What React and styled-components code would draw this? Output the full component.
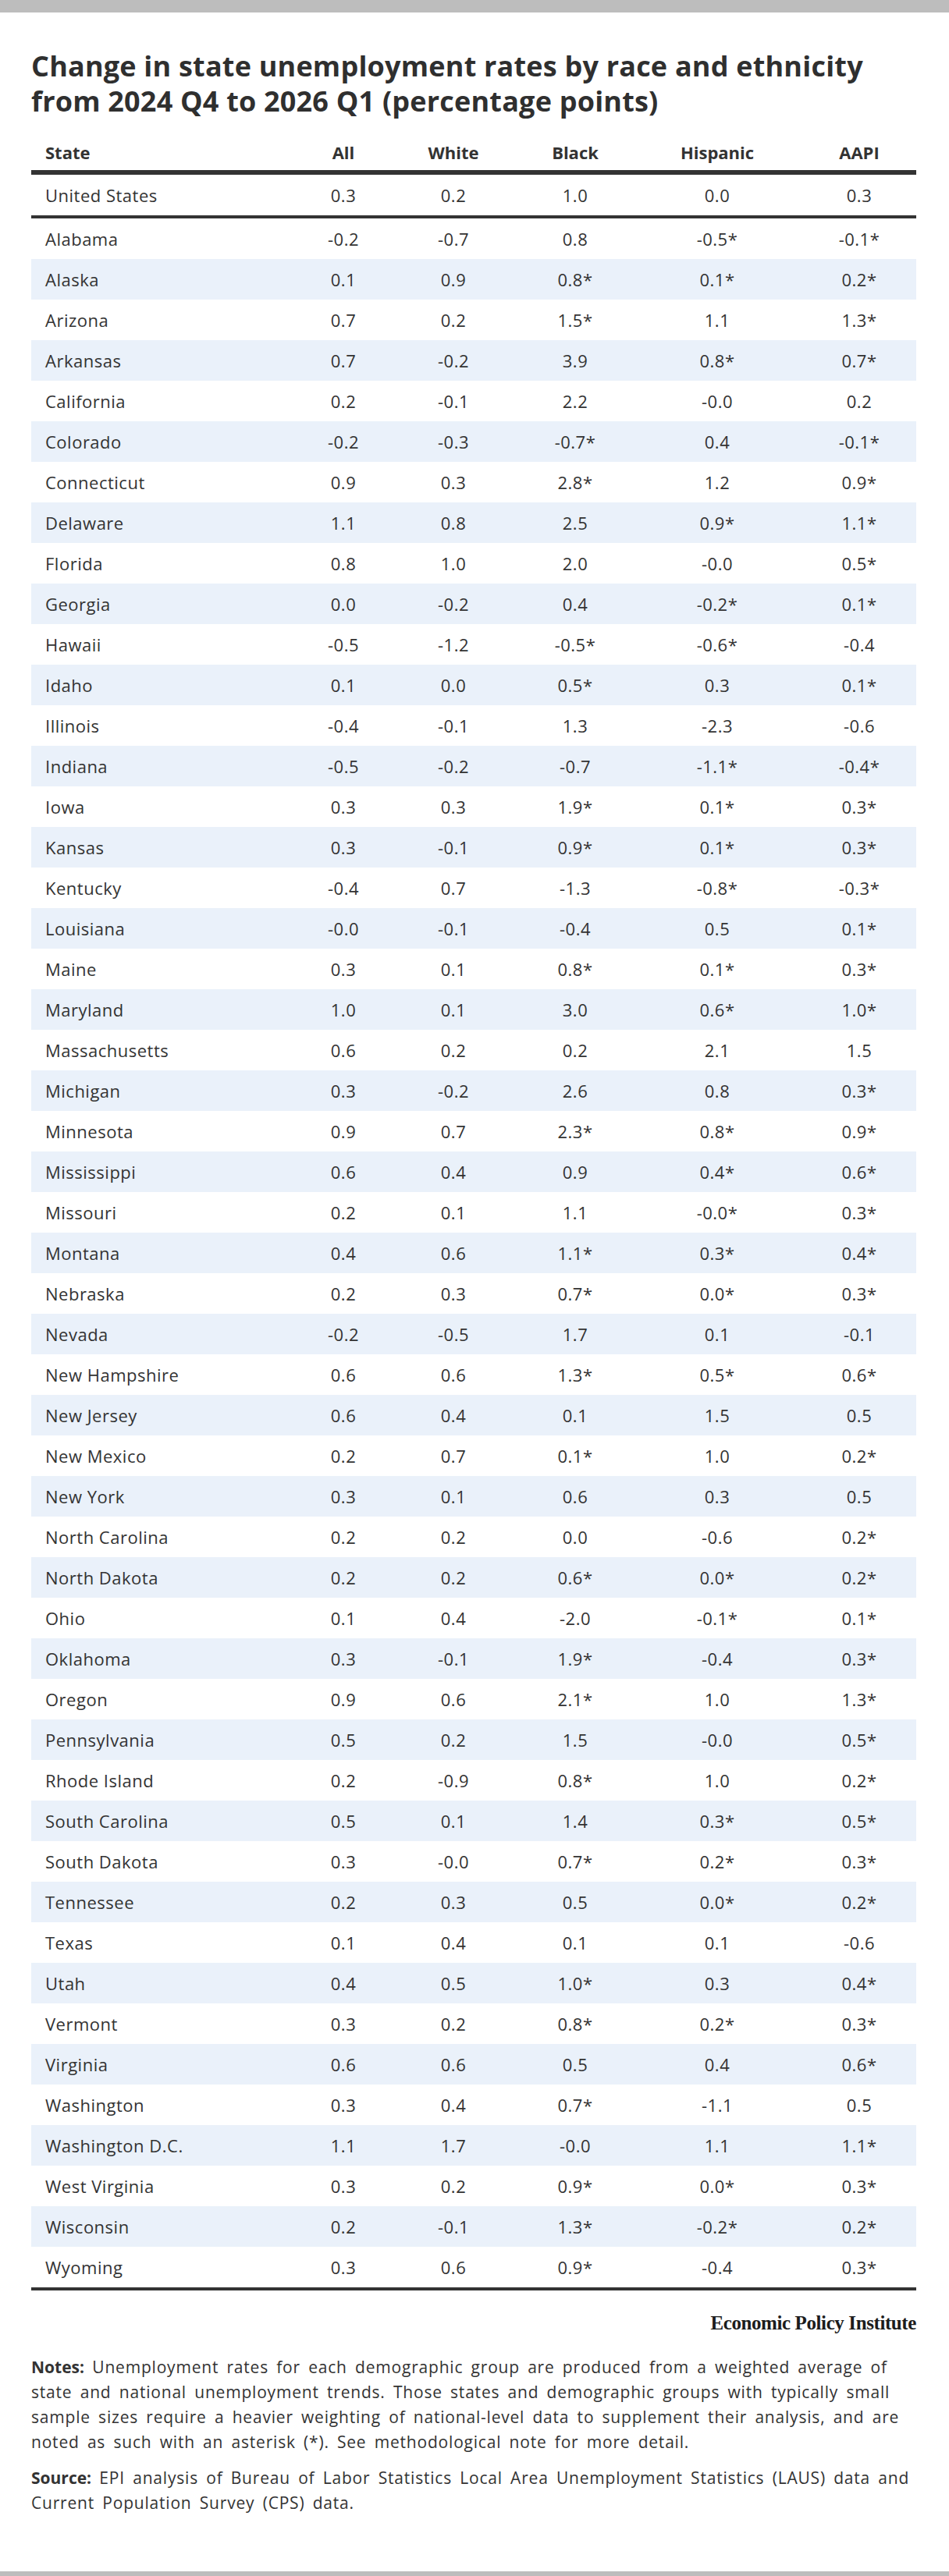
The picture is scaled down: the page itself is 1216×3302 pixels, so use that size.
import React from "react";
import styled, { createGlobalStyle } from "styled-components";

const GlobalStyle = createGlobalStyle`
  html, body {
    margin: 0;
    padding: 0;
    background: #fff;
  }
  body {
    font-family: "Open Sans", Lato, "Liberation Sans", sans-serif;
    color: #333;
  }
`;

const states = [
  ["Alabama", "-0.2", "-0.7", "0.8", "-0.5*", "-0.1*"],
  ["Alaska", "0.1", "0.9", "0.8*", "0.1*", "0.2*"],
  ["Arizona", "0.7", "0.2", "1.5*", "1.1", "1.3*"],
  ["Arkansas", "0.7", "-0.2", "3.9", "0.8*", "0.7*"],
  ["California", "0.2", "-0.1", "2.2", "-0.0", "0.2"],
  ["Colorado", "-0.2", "-0.3", "-0.7*", "0.4", "-0.1*"],
  ["Connecticut", "0.9", "0.3", "2.8*", "1.2", "0.9*"],
  ["Delaware", "1.1", "0.8", "2.5", "0.9*", "1.1*"],
  ["Florida", "0.8", "1.0", "2.0", "-0.0", "0.5*"],
  ["Georgia", "0.0", "-0.2", "0.4", "-0.2*", "0.1*"],
  ["Hawaii", "-0.5", "-1.2", "-0.5*", "-0.6*", "-0.4"],
  ["Idaho", "0.1", "0.0", "0.5*", "0.3", "0.1*"],
  ["Illinois", "-0.4", "-0.1", "1.3", "-2.3", "-0.6"],
  ["Indiana", "-0.5", "-0.2", "-0.7", "-1.1*", "-0.4*"],
  ["Iowa", "0.3", "0.3", "1.9*", "0.1*", "0.3*"],
  ["Kansas", "0.3", "-0.1", "0.9*", "0.1*", "0.3*"],
  ["Kentucky", "-0.4", "0.7", "-1.3", "-0.8*", "-0.3*"],
  ["Louisiana", "-0.0", "-0.1", "-0.4", "0.5", "0.1*"],
  ["Maine", "0.3", "0.1", "0.8*", "0.1*", "0.3*"],
  ["Maryland", "1.0", "0.1", "3.0", "0.6*", "1.0*"],
  ["Massachusetts", "0.6", "0.2", "0.2", "2.1", "1.5"],
  ["Michigan", "0.3", "-0.2", "2.6", "0.8", "0.3*"],
  ["Minnesota", "0.9", "0.7", "2.3*", "0.8*", "0.9*"],
  ["Mississippi", "0.6", "0.4", "0.9", "0.4*", "0.6*"],
  ["Missouri", "0.2", "0.1", "1.1", "-0.0*", "0.3*"],
  ["Montana", "0.4", "0.6", "1.1*", "0.3*", "0.4*"],
  ["Nebraska", "0.2", "0.3", "0.7*", "0.0*", "0.3*"],
  ["Nevada", "-0.2", "-0.5", "1.7", "0.1", "-0.1"],
  ["New Hampshire", "0.6", "0.6", "1.3*", "0.5*", "0.6*"],
  ["New Jersey", "0.6", "0.4", "0.1", "1.5", "0.5"],
  ["New Mexico", "0.2", "0.7", "0.1*", "1.0", "0.2*"],
  ["New York", "0.3", "0.1", "0.6", "0.3", "0.5"],
  ["North Carolina", "0.2", "0.2", "0.0", "-0.6", "0.2*"],
  ["North Dakota", "0.2", "0.2", "0.6*", "0.0*", "0.2*"],
  ["Ohio", "0.1", "0.4", "-2.0", "-0.1*", "0.1*"],
  ["Oklahoma", "0.3", "-0.1", "1.9*", "-0.4", "0.3*"],
  ["Oregon", "0.9", "0.6", "2.1*", "1.0", "1.3*"],
  ["Pennsylvania", "0.5", "0.2", "1.5", "-0.0", "0.5*"],
  ["Rhode Island", "0.2", "-0.9", "0.8*", "1.0", "0.2*"],
  ["South Carolina", "0.5", "0.1", "1.4", "0.3*", "0.5*"],
  ["South Dakota", "0.3", "-0.0", "0.7*", "0.2*", "0.3*"],
  ["Tennessee", "0.2", "0.3", "0.5", "0.0*", "0.2*"],
  ["Texas", "0.1", "0.4", "0.1", "0.1", "-0.6"],
  ["Utah", "0.4", "0.5", "1.0*", "0.3", "0.4*"],
  ["Vermont", "0.3", "0.2", "0.8*", "0.2*", "0.3*"],
  ["Virginia", "0.6", "0.6", "0.5", "0.4", "0.6*"],
  ["Washington", "0.3", "0.4", "0.7*", "-1.1", "0.5"],
  ["Washington D.C.", "1.1", "1.7", "-0.0", "1.1", "1.1*"],
  ["West Virginia", "0.3", "0.2", "0.9*", "0.0*", "0.3*"],
  ["Wisconsin", "0.2", "-0.1", "1.3*", "-0.2*", "0.2*"],
  ["Wyoming", "0.3", "0.6", "0.9*", "-0.4", "0.3*"],
];

const headers = ["State", "All", "White", "Black", "Hispanic", "AAPI"];
const nation = ["United States", "0.3", "0.2", "1.0", "0.0", "0.3"];

const Page = styled.div`
  display: flex;
  flex-direction: column;
  min-height: 3302px;
`;

const Bar = styled.div`
  height: ${(p) => p.h}px;
  background: #bdbdbd;
  flex-shrink: 0;
`;

const Figure = styled.main`
  flex: 1;
  padding: 46px 42px 0 40px;
`;

const Title = styled.h1`
  margin: 0 0 20px;
  font-size: 36px;
  line-height: 45px;
  font-weight: 700;
  color: #2f2f2f;
  letter-spacing: 0.2px;
`;

const Table = styled.div`
  display: flex;
  flex-direction: column;
  border-bottom: 4px solid #333;
`;

const Row = styled.div`
  display: grid;
  grid-template-columns: 342px 116px 166px 146px 218px 146px;
  align-items: center;
  height: ${(p) => (p.head ? 46 : 52)}px;
  background: ${(p) => (p.shade ? "#eaf1fa" : "transparent")};
  border-bottom: ${(p) => (p.line ? `${p.line}px solid #333` : "none")};
  font-size: 22px;
  font-weight: ${(p) => (p.head ? 700 : 400)};
  letter-spacing: ${(p) => (p.head ? "0" : "0.5px")};
  color: #333;
`;

const Cell = styled.div`
  text-align: ${(p) => (p.first ? "left" : "center")};
  padding-left: ${(p) => (p.first ? "18px" : "0")};
  white-space: nowrap;
`;

const Credit = styled.div`
  margin: 28px 0 0;
  text-align: right;
  font-family: "Liberation Serif", "DejaVu Serif", serif;
  font-weight: 700;
  font-size: 25px;
  letter-spacing: -0.4px;
  color: #1c1c1c;
`;

const Note = styled.p`
  margin: ${(p) => (p.first ? "26px" : "14px")} 0 0;
  font-size: 21px;
  line-height: 32px;
  letter-spacing: 0.8px;
  word-spacing: 4px;
  color: #333;

  b {
    font-weight: 700;
    letter-spacing: 0;
  }
`;

const DataRow = ({ cells, head, shade, line }) => (
  <Row head={head} shade={shade} line={line}>
    {cells.map((c, i) => (
      <Cell key={i} first={i === 0}>
        {c}
      </Cell>
    ))}
  </Row>
);

export default function App() {
  return (
    <Page>
      <GlobalStyle />
      <Bar h={16} />
      <Figure>
        <Title>
          Change in state unemployment rates by race and ethnicity
          <br />
          from 2024 Q4 to 2026 Q1 (percentage points)
        </Title>
        <Table>
          <DataRow cells={headers} head line={6} />
          <DataRow cells={nation} line={4} />
          {states.map((s, i) => (
            <DataRow key={s[0]} cells={s} shade={i % 2 === 1} />
          ))}
        </Table>
        <Credit>Economic Policy Institute</Credit>
        <Note first>
          <b>Notes:</b> Unemployment rates for each demographic group are
          produced from a weighted average of state and national unemployment
          trends. Those states and demographic groups with typically small
          sample sizes require a heavier weighting of national-level data to
          supplement their analysis, and are noted as such with an asterisk
          (*). See methodological note for more detail.
        </Note>
        <Note>
          <b>Source:</b> EPI analysis of Bureau of Labor Statistics Local Area
          Unemployment Statistics (LAUS) data and Current Population Survey
          (CPS) data.
        </Note>
      </Figure>
      <Bar h={6} />
    </Page>
  );
}
